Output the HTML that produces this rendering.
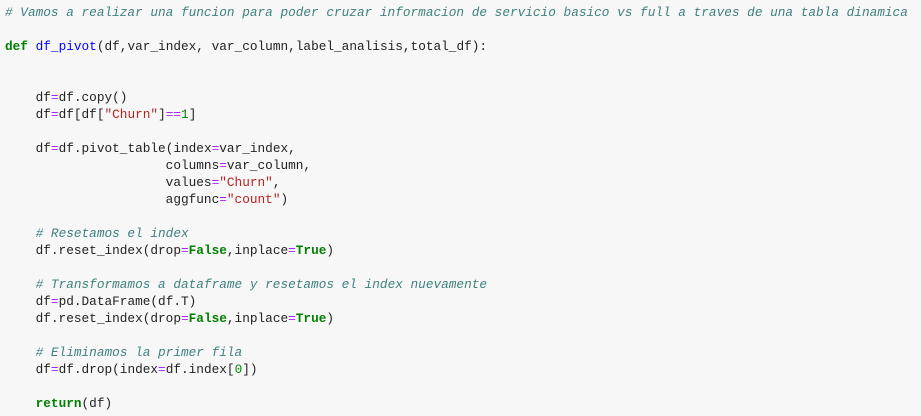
<!DOCTYPE html>
<html><head><meta charset="utf-8"><style>
html,body{margin:0;padding:0;background:#f7f7f7;width:921px;height:416px;overflow:hidden}
pre{margin:0;padding:4px 0 0 5px;font-family:"Liberation Mono",monospace;font-size:12.75px;line-height:17px;color:#222;white-space:pre}
.c{color:#408080;font-style:italic}
.k{color:#008000;font-weight:bold}
.f{color:#0000ff}
.s{color:#ba2121}
.o{color:#aa22ff}
.n{color:#008800}
</style></head><body><pre><span class="c"># Vamos a realizar una funcion para poder cruzar informacion de servicio basico vs full a traves de una tabla dinamica</span>

<span class="k">def</span> <span class="f">df_pivot</span>(df,var_index, var_column,label_analisis,total_df):


    df<span class="o">=</span>df.copy()
    df<span class="o">=</span>df[df[<span class="s">"Churn"</span>]<span class="o">==</span><span class="n">1</span>]

    df<span class="o">=</span>df.pivot_table(index<span class="o">=</span>var_index,
                     columns<span class="o">=</span>var_column,
                     values<span class="o">=</span><span class="s">"Churn"</span>,
                     aggfunc<span class="o">=</span><span class="s">"count"</span>)

    <span class="c"># Resetamos el index</span>
    df.reset_index(drop<span class="o">=</span><span class="k">False</span>,inplace<span class="o">=</span><span class="k">True</span>)

    <span class="c"># Transformamos a dataframe y resetamos el index nuevamente</span>
    df<span class="o">=</span>pd.DataFrame(df.T)
    df.reset_index(drop<span class="o">=</span><span class="k">False</span>,inplace<span class="o">=</span><span class="k">True</span>)

    <span class="c"># Eliminamos la primer fila</span>
    df<span class="o">=</span>df.drop(index<span class="o">=</span>df.index[<span class="n">0</span>])

    <span class="k">return</span>(df)</pre></body></html>
